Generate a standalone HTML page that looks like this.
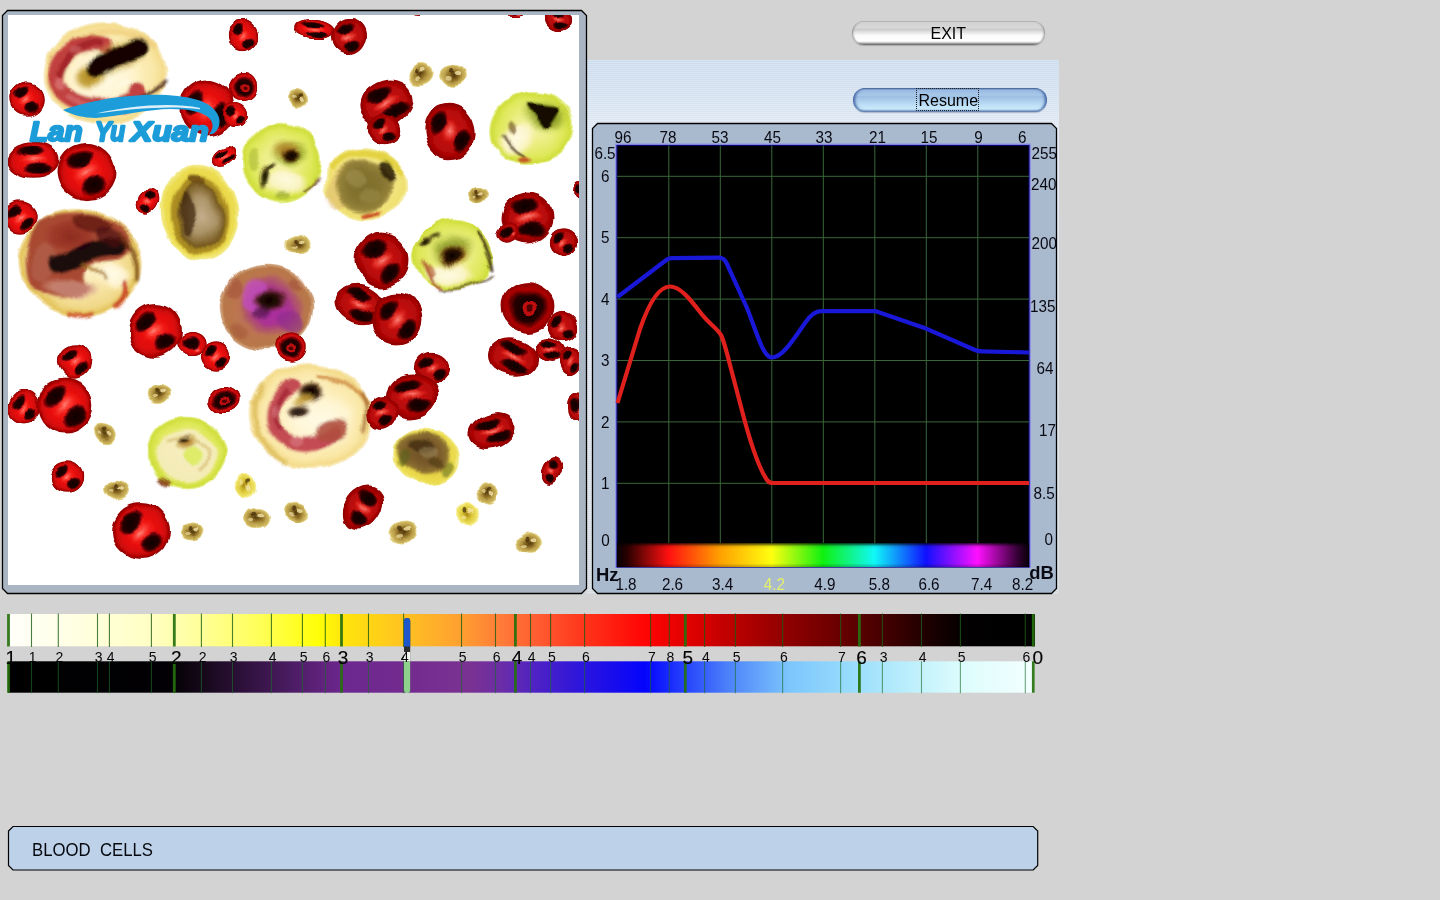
<!DOCTYPE html>
<html lang="en"><head><meta charset="utf-8"><title>BLOOD CELLS</title>
<style>
html,body{margin:0;padding:0}
body{width:1440px;height:900px;overflow:hidden;background:#d3d3d3;font-family:"Liberation Sans", sans-serif;position:relative;color:#000}
.abs{position:absolute;display:block}
svg text{font-family:"Liberation Sans", sans-serif}
.band{left:587px;top:60px;width:472px;height:534px;background:
 repeating-linear-gradient(180deg,rgba(255,255,255,.12) 0,rgba(255,255,255,.12) 1px,rgba(150,180,215,.10) 1px,rgba(150,180,215,.10) 2px),
 linear-gradient(180deg,#d3e1f0 0,#d9e5f2 30px,#e0e9f4 52px,#e6edf6 64px,#e2e7ee 300px,#dcdfe2 534px)}
.btn{height:23px;border-radius:12px;box-sizing:border-box;text-align:center;font-size:16px;line-height:23px}
.exit{left:851.5px;top:20.5px;width:193.5px;height:24.5px;border:0;
 background:linear-gradient(180deg,#adadad 0,#d2d2d2 6%,#d8d8d8 28%,#cbcbcb 35%,#e0e0e0 45%,#fafafa 60%,#ffffff 84%,#c4c4c4 91%,#6c6c6c 97%,#8a8a8a 100%);
 box-shadow:inset 2px 0 2px -1px #8c8c8c,inset -2px 0 2px -1px #8c8c8c,0 1px 1px rgba(120,120,120,.45);line-height:25.5px}
.resume{left:853px;top:88px;width:193.5px;height:23.5px;border:0;padding-right:3px;line-height:25px;
 background:linear-gradient(180deg,#3f5f8d 0,#98b9e1 8%,#a9c9ea 30%,#9dbde2 36%,#aacdec 50%,#c0e1f7 74%,#c8eafb 87%,#94b4d6 94%,#6683ab 100%);
 box-shadow:inset 3px 0 3px -1px #4060a0,inset -3px 0 3px -1px #4060a0,0 1px 1px rgba(90,110,140,.4)}
.focus{left:916px;top:88px;width:63px;height:23px;box-sizing:border-box;border:1px dotted #222}
.status{left:0;top:0}
.stxt{left:32px;top:839px;font-size:18px;line-height:22px;white-space:pre;color:#05080f;transform:scaleX(.93);transform-origin:0 0}
</style></head>
<body>
<div class="abs band"></div>
<svg class="abs" style="left:0;top:0" width="600" height="600" viewBox="0 0 600 600">
<defs><radialGradient id="rc" cx="0.5" cy="0.5" r="0.51"><stop offset="0" stop-color="#fc3a32"/><stop offset="0.4" stop-color="#ee1412"/><stop offset="0.72" stop-color="#dc0a0a"/><stop offset="0.87" stop-color="#c00606"/><stop offset="0.955" stop-color="#900000"/><stop offset="0.985" stop-color="#a00808" stop-opacity="0.9"/><stop offset="1" stop-color="#c83030" stop-opacity="0"/></radialGradient>
<radialGradient id="dk" cx="0.5" cy="0.5" r="0.5"><stop offset="0" stop-color="#080004" stop-opacity="0.98"/><stop offset="0.66" stop-color="#1c0004" stop-opacity="0.95"/><stop offset="0.86" stop-color="#500004" stop-opacity="0.6"/><stop offset="1" stop-color="#900000" stop-opacity="0"/></radialGradient>
<radialGradient id="hl" cx="0.5" cy="0.5" r="0.5"><stop offset="0" stop-color="#ff8c80" stop-opacity="0.9"/><stop offset="0.55" stop-color="#ff5044" stop-opacity="0.5"/><stop offset="1" stop-color="#ff3020" stop-opacity="0"/></radialGradient>
<radialGradient id="tb" cx="0.5" cy="0.5" r="0.5"><stop offset="0" stop-color="#50380c"/><stop offset="0.35" stop-color="#8c6c24"/><stop offset="0.6" stop-color="#b89c48"/><stop offset="0.84" stop-color="#d0b860"/><stop offset="0.94" stop-color="#e8d890" stop-opacity="0.8"/><stop offset="1" stop-color="#fff8d8" stop-opacity="0"/></radialGradient>
<radialGradient id="tby" cx="0.5" cy="0.5" r="0.5"><stop offset="0" stop-color="#a88818"/><stop offset="0.4" stop-color="#dcc838"/><stop offset="0.8" stop-color="#f0e468"/><stop offset="0.93" stop-color="#f8f0a0" stop-opacity="0.8"/><stop offset="1" stop-color="#fffcd0" stop-opacity="0"/></radialGradient>
<radialGradient id="b_beige" cx="0.5" cy="0.5" r="0.5"><stop offset="0" stop-color="#fff8dc"/><stop offset="0.5" stop-color="#fdf0c0"/><stop offset="0.8" stop-color="#fae8a8"/><stop offset="0.93" stop-color="#f4dc8c"/><stop offset="0.975" stop-color="#f6e4a8" stop-opacity="0.7"/><stop offset="1" stop-color="#fff4d0" stop-opacity="0"/></radialGradient>
<radialGradient id="b_beige2" cx="0.5" cy="0.5" r="0.5"><stop offset="0" stop-color="#fff4d0"/><stop offset="0.55" stop-color="#f8e6a8"/><stop offset="0.82" stop-color="#f0d888"/><stop offset="0.93" stop-color="#e4c45c"/><stop offset="0.975" stop-color="#f0d890" stop-opacity="0.7"/><stop offset="1" stop-color="#fff4d0" stop-opacity="0"/></radialGradient>
<radialGradient id="b_yg" cx="0.5" cy="0.5" r="0.5"><stop offset="0" stop-color="#f6f4b0"/><stop offset="0.45" stop-color="#ecee84"/><stop offset="0.78" stop-color="#dee858"/><stop offset="0.93" stop-color="#d0de3c"/><stop offset="0.98" stop-color="#e4ee80" stop-opacity="0.75"/><stop offset="1" stop-color="#f8fcd0" stop-opacity="0"/></radialGradient>
<radialGradient id="b_yellow" cx="0.5" cy="0.5" r="0.5"><stop offset="0" stop-color="#e0c43c"/><stop offset="0.6" stop-color="#e8d444"/><stop offset="0.88" stop-color="#ecdc50"/><stop offset="0.965" stop-color="#f0e670" stop-opacity="0.85"/><stop offset="1" stop-color="#fcf8c0" stop-opacity="0"/></radialGradient>
<radialGradient id="b_ylight" cx="0.5" cy="0.5" r="0.5"><stop offset="0" stop-color="#f4e478"/><stop offset="0.6" stop-color="#f2e684"/><stop offset="0.9" stop-color="#f0e070"/><stop offset="0.97" stop-color="#f4ea98" stop-opacity="0.8"/><stop offset="1" stop-color="#fcf8d0" stop-opacity="0"/></radialGradient>
<radialGradient id="b_pink" cx="0.5" cy="0.5" r="0.5"><stop offset="0" stop-color="#b86850"/><stop offset="0.6" stop-color="#bc7452"/><stop offset="0.9" stop-color="#b87848"/><stop offset="0.97" stop-color="#c89468" stop-opacity="0.85"/><stop offset="1" stop-color="#f0d8c0" stop-opacity="0"/></radialGradient>
<radialGradient id="c_tan" cx="0.5" cy="0.5" r="0.5"><stop offset="0" stop-color="#c4ae8c"/><stop offset="0.55" stop-color="#ac9468"/><stop offset="0.85" stop-color="#846830"/><stop offset="1" stop-color="#6c5018"/></radialGradient>
<radialGradient id="c_olive" cx="0.5" cy="0.5" r="0.5"><stop offset="0" stop-color="#7c6c2c"/><stop offset="0.6" stop-color="#857430"/><stop offset="0.88" stop-color="#94823a"/><stop offset="1" stop-color="#a89040" stop-opacity="0.6"/></radialGradient>
<radialGradient id="c_brown" cx="0.5" cy="0.5" r="0.5"><stop offset="0" stop-color="#6c5024"/><stop offset="0.6" stop-color="#7c5c2c"/><stop offset="0.9" stop-color="#8c7030"/><stop offset="1" stop-color="#a08838" stop-opacity="0.5"/></radialGradient>
<radialGradient id="s_dark" cx="0.5" cy="0.5" r="0.5"><stop offset="0" stop-color="#0a0200"/><stop offset="0.55" stop-color="#200a00" stop-opacity="0.95"/><stop offset="0.8" stop-color="#4c2008" stop-opacity="0.6"/><stop offset="1" stop-color="#804818" stop-opacity="0"/></radialGradient>
<radialGradient id="s_olvdark" cx="0.5" cy="0.5" r="0.5"><stop offset="0" stop-color="#100c00"/><stop offset="0.5" stop-color="#2c2408" stop-opacity="0.9"/><stop offset="0.8" stop-color="#605018" stop-opacity="0.5"/><stop offset="1" stop-color="#90802c" stop-opacity="0"/></radialGradient>
<radialGradient id="s_cream" cx="0.5" cy="0.5" r="0.5"><stop offset="0" stop-color="#fffbe8"/><stop offset="0.65" stop-color="#fff6d8" stop-opacity="0.9"/><stop offset="1" stop-color="#fff0c0" stop-opacity="0"/></radialGradient>
<radialGradient id="s_mag" cx="0.5" cy="0.5" r="0.5"><stop offset="0" stop-color="#b028b0"/><stop offset="0.55" stop-color="#a82c98" stop-opacity="0.9"/><stop offset="0.85" stop-color="#a84078" stop-opacity="0.5"/><stop offset="1" stop-color="#a85868" stop-opacity="0"/></radialGradient>
<radialGradient id="s_gold" cx="0.5" cy="0.5" r="0.5"><stop offset="0" stop-color="#b08820"/><stop offset="0.6" stop-color="#c09c30" stop-opacity="0.9"/><stop offset="1" stop-color="#e0c060" stop-opacity="0"/></radialGradient>
<radialGradient id="s_pinkbr" cx="0.5" cy="0.5" r="0.5"><stop offset="0" stop-color="#c07c6c"/><stop offset="0.6" stop-color="#c88878" stop-opacity="0.85"/><stop offset="1" stop-color="#e0b098" stop-opacity="0"/></radialGradient>
<radialGradient id="s_redbr" cx="0.5" cy="0.5" r="0.5"><stop offset="0" stop-color="#8c2c20"/><stop offset="0.6" stop-color="#9c3828" stop-opacity="0.9"/><stop offset="1" stop-color="#b05038" stop-opacity="0"/></radialGradient>
<radialGradient id="s_brownhalo" cx="0.5" cy="0.5" r="0.5"><stop offset="0" stop-color="#a87020" stop-opacity="0.95"/><stop offset="0.55" stop-color="#b88c30" stop-opacity="0.7"/><stop offset="1" stop-color="#d0c050" stop-opacity="0"/></radialGradient>
<radialGradient id="s_grnhalo" cx="0.5" cy="0.5" r="0.5"><stop offset="0" stop-color="#647410" stop-opacity="0.95"/><stop offset="0.55" stop-color="#8c9c20" stop-opacity="0.75"/><stop offset="1" stop-color="#c8d848" stop-opacity="0"/></radialGradient><clipPath id="imgclip"><rect x="8" y="15" width="571" height="570"/></clipPath><filter id="soft" x="0" y="0" width="100%" height="100%" filterUnits="objectBoundingBox"><feTurbulence type="fractalNoise" baseFrequency="0.035" numOctaves="2" seed="7" result="n"/><feDisplacementMap in="SourceGraphic" in2="n" scale="9" xChannelSelector="R" yChannelSelector="G"/><feGaussianBlur stdDeviation="0.55"/></filter><filter id="bl13" x="-20%" y="-20%" width="140%" height="140%"><feGaussianBlur stdDeviation="1.3"/></filter><filter id="bl16" x="-20%" y="-20%" width="140%" height="140%"><feGaussianBlur stdDeviation="1.6"/></filter></defs>
<polygon points="7.5,10.5 581.5,10.5 586.5,15.5 586.5,588.5 581.5,593.5 7.5,593.5 2.5,588.5 2.5,15.5" fill="#a9b5c3" stroke="#000" stroke-width="1.3"/>
<rect x="8" y="15" width="571" height="570" fill="#fff"/>
<g clip-path="url(#imgclip)"><g filter="url(#soft)">
<ellipse cx="104.5" cy="73.5" rx="63" ry="52.5" fill="url(#b_beige)" transform="rotate(-4 104.5 73.5)"/><g filter="url(#bl16)"><path d="M62 52 C82 27 130 25 154 46" fill="none" stroke="#f0d080" stroke-width="6" stroke-linecap="round" stroke-linejoin="round" opacity="0.8"/><ellipse cx="102" cy="76" rx="44" ry="32" fill="url(#s_cream)" transform="rotate(-8 102 76)" opacity="0.9"/><path d="M104 45 C80 38 57 56 56 76 C55 98 85 112 120 104 C134 100 140 95 137 91" fill="none" stroke="#bc3438" stroke-width="17" stroke-linecap="round" stroke-linejoin="round" opacity="0.93"/><path d="M100 43 C84 42 66 54 61 72" fill="none" stroke="#98181e" stroke-width="8" stroke-linecap="round" stroke-linejoin="round" opacity="0.7"/><path d="M68 97 C86 108 106 110 126 104" fill="none" stroke="#dc7c7c" stroke-width="6" stroke-linecap="round" stroke-linejoin="round" opacity="0.55"/><ellipse cx="60" cy="84" rx="5" ry="7" fill="#e89090" opacity="0.5"/><ellipse cx="76" cy="50" rx="6" ry="4" fill="#e08888" opacity="0.45"/><ellipse cx="98" cy="106" rx="7" ry="4" fill="#a02028" opacity="0.5"/><ellipse cx="90" cy="76" rx="18" ry="15" fill="url(#s_gold)" transform="rotate(-20 90 76)"/><ellipse cx="118" cy="58" rx="35" ry="18" fill="url(#s_brownhalo)" transform="rotate(-24 118 58)" opacity="0.9"/><path d="M96 68 L138 48" fill="none" stroke="#140400" stroke-width="19.5" stroke-linecap="round" stroke-linejoin="round"/><path d="M128 103 Q150 96 166 80" fill="none" stroke="#3a1408" stroke-width="2.8" stroke-linecap="round" stroke-linejoin="round"/><ellipse cx="124" cy="83" rx="14" ry="5" fill="url(#s_cream)" transform="rotate(-20 124 83)" opacity="0.9"/></g>
<ellipse cx="80" cy="263" rx="63" ry="55" fill="url(#b_beige2)" transform="rotate(8 80 263)"/><g filter="url(#bl16)"><path d="M38 222 C60 209 108 210 126 232 C137 252 124 264 98 262 C84 262 78 275 90 291 C74 303 42 301 31 285 C23 265 28 238 38 222z" fill="#a84832"/><ellipse cx="70" cy="236" rx="32" ry="19" fill="url(#s_redbr)" transform="rotate(5 70 236)"/><ellipse cx="92" cy="224" rx="20" ry="8" fill="#5c1410" transform="rotate(10 92 224)" opacity="0.75"/><ellipse cx="70" cy="289" rx="31" ry="11" fill="url(#s_pinkbr)" transform="rotate(5 70 289)"/><ellipse cx="44" cy="262" rx="12" ry="20" fill="#b46850" transform="rotate(10 44 262)" opacity="0.6"/><path d="M57 264 C72 263 84 247 118 246" fill="none" stroke="#180406" stroke-width="18" stroke-linecap="round" stroke-linejoin="round" opacity="0.96"/><ellipse cx="110" cy="236" rx="14" ry="8" fill="#4c1010" transform="rotate(25 110 236)" opacity="0.7"/><ellipse cx="112" cy="276" rx="21" ry="14" fill="url(#s_cream)" transform="rotate(10 112 276)"/><path d="M82 264 Q98 268 104 281" fill="none" stroke="#a07020" stroke-width="3.2" stroke-linecap="round" stroke-linejoin="round" opacity="0.85"/><path d="M125 283 Q130 296 116 306" fill="none" stroke="#c43018" stroke-width="4.2" stroke-linecap="round" stroke-linejoin="round" opacity="0.9"/><path d="M70 314 Q80 318 92 314" fill="none" stroke="#c43018" stroke-width="3.2" stroke-linecap="round" stroke-linejoin="round" opacity="0.9"/><path d="M120 234 Q139 252 137 280" fill="none" stroke="#5c2808" stroke-width="3.2" stroke-linecap="round" stroke-linejoin="round" opacity="0.8"/></g>
<ellipse cx="310.5" cy="416" rx="63" ry="54" fill="url(#b_beige)" transform="rotate(5 310.5 416)"/><g filter="url(#bl16)"><path d="M262 386 C248 410 255 446 286 463" fill="none" stroke="#dcbc58" stroke-width="5" stroke-linecap="round" stroke-linejoin="round" opacity="0.8"/><ellipse cx="320" cy="420" rx="40" ry="30" fill="url(#s_cream)" opacity="0.8"/><path d="M294 386 C272 394 266 426 284 438 C300 448 322 444 334 432" fill="none" stroke="#bc3444" stroke-width="14" stroke-linecap="round" stroke-linejoin="round" opacity="0.88"/><path d="M286 392 C276 402 274 418 280 428" fill="none" stroke="#981c2c" stroke-width="6" stroke-linecap="round" stroke-linejoin="round" opacity="0.6"/><ellipse cx="332" cy="430" rx="16" ry="10" fill="#b05040" transform="rotate(-10 332 430)" opacity="0.9"/><ellipse cx="296" cy="440" rx="8" ry="5" fill="#e08890" opacity="0.5"/><ellipse cx="276" cy="410" rx="4" ry="6" fill="#e08890" opacity="0.5"/><ellipse cx="311" cy="393" rx="14" ry="9.5" fill="url(#s_dark)" transform="rotate(-5 311 393)"/><ellipse cx="300" cy="411" rx="12" ry="7" fill="url(#s_dark)" transform="rotate(-5 300 411)" opacity="0.9"/><ellipse cx="304" cy="400" rx="13" ry="5" fill="url(#s_gold)" transform="rotate(-10 304 400)" opacity="0.85"/><path d="M318 378 Q350 376 368 405" fill="none" stroke="#c47830" stroke-width="3.2" stroke-linecap="round" stroke-linejoin="round" opacity="0.85"/><path d="M362 392 Q370 410 364 430" fill="none" stroke="#8c4818" stroke-width="2.8" stroke-linecap="round" stroke-linejoin="round" opacity="0.75"/></g>
<ellipse cx="200" cy="212.5" rx="39" ry="49" fill="url(#b_yellow)" transform="rotate(-10 200 212.5)"/><g filter="url(#bl13)"><ellipse cx="200" cy="215" rx="29" ry="39" fill="#a4841c" transform="rotate(-8 200 215)" opacity="0.9"/><ellipse cx="201" cy="215" rx="23.5" ry="33.5" fill="url(#c_tan)" transform="rotate(-8 201 215)"/><ellipse cx="187" cy="212" rx="7" ry="22" fill="#38200a" transform="rotate(-8 187 212)" opacity="0.7"/><ellipse cx="196" cy="180" rx="9" ry="4" fill="#6c4810" transform="rotate(10 196 180)" opacity="0.8"/></g>
<ellipse cx="365" cy="184" rx="42" ry="36.5" fill="url(#b_ylight)" transform="rotate(5 365 184)"/><g filter="url(#bl13)"><path d="M334 166 C350 148 388 150 400 172" fill="none" stroke="#e0d038" stroke-width="6" stroke-linecap="round" stroke-linejoin="round" opacity="0.85"/><ellipse cx="340" cy="190" rx="12" ry="22" fill="#e0bc70" transform="rotate(10 340 190)" opacity="0.6"/><ellipse cx="363" cy="186" rx="29" ry="26" fill="url(#c_olive)" transform="rotate(5 363 186)"/><ellipse cx="356" cy="180" rx="12" ry="8" fill="#a89858" transform="rotate(20 356 180)" opacity="0.5"/><ellipse cx="370" cy="196" rx="10" ry="6" fill="#a09050" transform="rotate(-10 370 196)" opacity="0.45"/><ellipse cx="386" cy="171" rx="7" ry="10" fill="#241804" transform="rotate(-25 386 171)" opacity="0.85"/><ellipse cx="372" cy="214" rx="10" ry="2.6" fill="#c84020" transform="rotate(-10 372 214)" opacity="0.85"/></g>
<ellipse cx="426" cy="456" rx="34" ry="28.5" fill="url(#b_yellow)" transform="rotate(18 426 456)"/><g filter="url(#bl13)"><ellipse cx="423" cy="452.5" rx="27" ry="21.5" fill="url(#c_brown)" transform="rotate(15 423 452.5)"/><ellipse cx="420" cy="446" rx="12" ry="7" fill="#3c2810" transform="rotate(10 420 446)" opacity="0.7"/><ellipse cx="436" cy="462" rx="8" ry="5" fill="#4c3814" transform="rotate(10 436 462)" opacity="0.6"/><ellipse cx="428" cy="452" rx="9" ry="6" fill="#a08c60" opacity="0.5"/><ellipse cx="404" cy="458" rx="5" ry="9" fill="#586018" transform="rotate(10 404 458)" opacity="0.6"/><ellipse cx="448" cy="468" rx="5" ry="8" fill="#687020" transform="rotate(30 448 468)" opacity="0.6"/></g>
<ellipse cx="281.5" cy="162" rx="40" ry="41" fill="url(#b_yg)"/><g filter="url(#bl13)"><ellipse cx="286" cy="182" rx="24" ry="14" fill="url(#s_cream)" opacity="0.9"/><ellipse cx="290" cy="153" rx="21" ry="15" fill="url(#s_grnhalo)"/><ellipse cx="286" cy="150" rx="16" ry="11" fill="url(#s_brownhalo)"/><ellipse cx="290.5" cy="154.5" rx="11" ry="7.5" fill="url(#s_dark)"/><ellipse cx="264" cy="176" rx="5" ry="14" fill="url(#s_olvdark)" transform="rotate(8 264 176)"/><ellipse cx="270" cy="166" rx="8" ry="3.5" fill="url(#s_olvdark)" transform="rotate(-30 270 166)" opacity="0.85"/><ellipse cx="255" cy="160" rx="5" ry="12" fill="#a0b028" transform="rotate(10 255 160)" opacity="0.5"/><path d="M305 190 Q314 186 318 178" fill="none" stroke="#5c3010" stroke-width="2.4" stroke-linecap="round" stroke-linejoin="round" opacity="0.85"/><ellipse cx="282" cy="196" rx="8" ry="3" fill="#90a028" opacity="0.6"/></g>
<ellipse cx="531" cy="128" rx="43" ry="37" fill="url(#b_yg)" transform="rotate(-18 531 128)"/><g filter="url(#bl13)"><ellipse cx="516" cy="140" rx="22" ry="16" fill="url(#s_cream)" transform="rotate(-20 516 140)" opacity="0.95"/><ellipse cx="546" cy="116" rx="27" ry="19" fill="url(#s_grnhalo)" transform="rotate(10 546 116)"/><path d="M531 106 L557 109 L546 127z" fill="#181000" stroke="#181000" stroke-width="6" stroke-linecap="round" stroke-linejoin="round"/><path d="M503 134 Q510 148 524 156" fill="none" stroke="#4c3008" stroke-width="2.8" stroke-linecap="round" stroke-linejoin="round" opacity="0.85"/><ellipse cx="512" cy="128" rx="4" ry="7" fill="#604010" transform="rotate(-20 512 128)" opacity="0.6"/><ellipse cx="524" cy="160" rx="6" ry="2.5" fill="#c03020" opacity="0.8"/></g>
<path d="M412 268 C410 240 432 217 456 218 C476 219 490 240 495 272 C494 284 470 290 440 291 C420 291 412 282 412 268z" fill="url(#b_yg)"/><g filter="url(#bl13)"><ellipse cx="448" cy="274" rx="28" ry="13" fill="url(#s_cream)" transform="rotate(5 448 274)" opacity="0.95"/><ellipse cx="452" cy="250" rx="24" ry="19" fill="url(#s_grnhalo)"/><ellipse cx="454" cy="256" rx="18" ry="14" fill="url(#s_brownhalo)"/><ellipse cx="452" cy="254.5" rx="13.5" ry="12" fill="url(#s_dark)"/><ellipse cx="427" cy="241" rx="9" ry="5" fill="url(#s_olvdark)" transform="rotate(-30 427 241)"/><ellipse cx="436" cy="235" rx="6" ry="3" fill="url(#s_olvdark)" transform="rotate(-20 436 235)" opacity="0.8"/><path d="M476 232 Q487 248 492 270" fill="none" stroke="#2c2008" stroke-width="2.8" stroke-linecap="round" stroke-linejoin="round" opacity="0.9"/><path d="M424 262 Q428 278 440 288" fill="none" stroke="#a84028" stroke-width="3" stroke-linecap="round" stroke-linejoin="round" opacity="0.8"/><path d="M440 290 Q466 290 492 276" fill="none" stroke="#3c2408" stroke-width="2.2" stroke-linecap="round" stroke-linejoin="round" opacity="0.7"/><ellipse cx="430" cy="270" rx="4" ry="8" fill="#b05830" transform="rotate(-20 430 270)" opacity="0.65"/></g>
<ellipse cx="187" cy="453" rx="40" ry="37" fill="url(#b_yg)"/><g filter="url(#bl13)"><ellipse cx="186" cy="456" rx="30" ry="27" fill="#f6ecc0" opacity="0.9"/><ellipse cx="187" cy="441" rx="12" ry="8" fill="url(#s_brownhalo)" transform="rotate(-15 187 441)"/><ellipse cx="184" cy="438" rx="6" ry="4.5" fill="url(#s_dark)" transform="rotate(-20 184 438)"/><ellipse cx="193" cy="456" rx="9" ry="10" fill="#dcec60" opacity="0.9"/><path d="M168 440 Q186 430 206 446 Q212 460 200 470" fill="none" stroke="#d8c078" stroke-width="3" stroke-linecap="round" stroke-linejoin="round" opacity="0.8"/><ellipse cx="164" cy="481" rx="7" ry="3" fill="#7c2c10" transform="rotate(30 164 481)" opacity="0.8"/></g>
<ellipse cx="266.5" cy="307.5" rx="47.5" ry="43.5" fill="url(#b_pink)"/><g filter="url(#bl16)"><ellipse cx="271" cy="306" rx="35" ry="30" fill="url(#s_mag)" transform="rotate(25 271 306)"/><ellipse cx="254" cy="296" rx="13" ry="16" fill="#c850d0" transform="rotate(20 254 296)" opacity="0.65"/><ellipse cx="290" cy="322" rx="14" ry="10" fill="#8c2c90" transform="rotate(30 290 322)" opacity="0.6"/><ellipse cx="270" cy="300" rx="20" ry="11.5" fill="url(#s_dark)" transform="rotate(-5 270 300)"/><ellipse cx="262" cy="312" rx="10" ry="5" fill="#301030" transform="rotate(-10 262 312)" opacity="0.5"/><ellipse cx="240" cy="330" rx="10" ry="6" fill="#a45838" transform="rotate(30 240 330)" opacity="0.6"/><ellipse cx="234" cy="290" rx="7" ry="10" fill="#a04838" transform="rotate(10 234 290)" opacity="0.5"/><ellipse cx="296" cy="284" rx="8" ry="5" fill="#a04838" transform="rotate(30 296 284)" opacity="0.5"/></g>
<g transform="translate(243 36) rotate(0) scale(15 15)"><circle r="1.02" fill="url(#rc)"/><ellipse cx="-.36" cy="-.34" rx=".56" ry=".33" fill="url(#dk)" transform="rotate(-42 -.36 -.34)"/><ellipse cx=".38" cy=".42" rx=".5" ry=".36" fill="url(#dk)" transform="rotate(-42 .38 .42)"/><ellipse cx="0" cy=".04" rx=".24" ry=".5" fill="url(#hl)" transform="rotate(42)"/></g>
<g transform="translate(315 30) rotate(5) scale(19.5 10)"><circle r="1.02" fill="url(#rc)"/><ellipse cx="-.12" cy="-.46" rx=".62" ry=".34" fill="url(#dk)"/><ellipse cx=".18" cy=".5" rx=".62" ry=".34" fill="url(#dk)"/><ellipse cx="0" cy="0" rx=".6" ry=".2" fill="url(#hl)"/></g>
<g transform="translate(348.5 36.5) rotate(20) scale(16 17.5)"><circle r="1.02" fill="url(#rc)"/><circle r=".97" fill="#500000" opacity=".28"/><ellipse cx="-.36" cy="-.34" rx=".56" ry=".33" fill="url(#dk)" transform="rotate(-42 -.36 -.34)"/><ellipse cx=".38" cy=".42" rx=".5" ry=".36" fill="url(#dk)" transform="rotate(-42 .38 .42)"/><ellipse cx="0" cy=".04" rx=".24" ry=".5" fill="url(#hl)" transform="rotate(42)"/></g>
<g transform="translate(559 19) rotate(0) scale(14 12)"><circle r="1.02" fill="url(#rc)"/><circle r=".97" fill="#500000" opacity=".28"/><ellipse cx="-.12" cy="-.46" rx=".62" ry=".34" fill="url(#dk)"/><ellipse cx=".18" cy=".5" rx=".62" ry=".34" fill="url(#dk)"/><ellipse cx="0" cy="0" rx=".6" ry=".2" fill="url(#hl)"/></g>
<g transform="translate(420 12) rotate(0) scale(12 5)"><circle r="1.02" fill="url(#rc)"/><circle r=".97" fill="#500000" opacity=".28"/><ellipse cx="-.1" cy="-.1" rx=".72" ry=".62" fill="url(#dk)"/><ellipse cx=".35" cy=".45" rx=".3" ry=".24" fill="url(#hl)"/></g>
<g transform="translate(517 12) rotate(0) scale(10 4)"><circle r="1.02" fill="url(#rc)"/><circle r=".97" fill="#500000" opacity=".28"/><ellipse cx="-.1" cy="-.1" rx=".72" ry=".62" fill="url(#dk)"/><ellipse cx=".35" cy=".45" rx=".3" ry=".24" fill="url(#hl)"/></g>
<g transform="translate(27 99) rotate(10) scale(16.5 16.5)"><circle r="1.02" fill="url(#rc)"/><ellipse cx="-.36" cy="-.34" rx=".56" ry=".33" fill="url(#dk)" transform="rotate(-42 -.36 -.34)"/><ellipse cx=".38" cy=".42" rx=".5" ry=".36" fill="url(#dk)" transform="rotate(-42 .38 .42)"/><ellipse cx="0" cy=".04" rx=".24" ry=".5" fill="url(#hl)" transform="rotate(42)"/></g>
<g transform="translate(243 87) rotate(0) scale(14 14)"><circle r="1.02" fill="url(#rc)"/><ellipse cx="0" cy="0" rx=".84" ry=".8" fill="url(#dk)"/><ellipse cx=".04" cy=".02" rx=".3" ry=".28" fill="#c01010"/><ellipse cx=".04" cy=".02" rx=".14" ry=".13" fill="#500000"/></g>
<g transform="translate(207 108) rotate(-20) scale(28 28)"><circle r="1.02" fill="url(#rc)"/><ellipse cx="-.36" cy="-.34" rx=".56" ry=".33" fill="url(#dk)" transform="rotate(-42 -.36 -.34)"/><ellipse cx=".38" cy=".42" rx=".5" ry=".36" fill="url(#dk)" transform="rotate(-42 .38 .42)"/><ellipse cx="0" cy=".04" rx=".24" ry=".5" fill="url(#hl)" transform="rotate(42)"/></g>
<g transform="translate(236 115) rotate(0) scale(13 12)"><circle r="1.02" fill="url(#rc)"/><ellipse cx="-.36" cy="-.34" rx=".56" ry=".33" fill="url(#dk)" transform="rotate(-42 -.36 -.34)"/><ellipse cx=".38" cy=".42" rx=".5" ry=".36" fill="url(#dk)" transform="rotate(-42 .38 .42)"/><ellipse cx="0" cy=".04" rx=".24" ry=".5" fill="url(#hl)" transform="rotate(42)"/></g>
<g transform="translate(386 103) rotate(-25) scale(27 22)"><circle r="1.02" fill="url(#rc)"/><circle r=".97" fill="#500000" opacity=".28"/><ellipse cx="-.12" cy="-.46" rx=".62" ry=".34" fill="url(#dk)"/><ellipse cx=".18" cy=".5" rx=".62" ry=".34" fill="url(#dk)"/><ellipse cx="0" cy="0" rx=".6" ry=".2" fill="url(#hl)"/></g>
<g transform="translate(385 129) rotate(10) scale(17 16)"><circle r="1.02" fill="url(#rc)"/><circle r=".97" fill="#500000" opacity=".28"/><ellipse cx="-.36" cy="-.34" rx=".56" ry=".33" fill="url(#dk)" transform="rotate(-42 -.36 -.34)"/><ellipse cx=".38" cy=".42" rx=".5" ry=".36" fill="url(#dk)" transform="rotate(-42 .38 .42)"/><ellipse cx="0" cy=".04" rx=".24" ry=".5" fill="url(#hl)" transform="rotate(42)"/></g>
<g transform="translate(450 131) rotate(-15) scale(25 28)"><circle r="1.02" fill="url(#rc)"/><circle r=".97" fill="#500000" opacity=".28"/><ellipse cx="-.36" cy="-.34" rx=".56" ry=".33" fill="url(#dk)" transform="rotate(-42 -.36 -.34)"/><ellipse cx=".38" cy=".42" rx=".5" ry=".36" fill="url(#dk)" transform="rotate(-42 .38 .42)"/><ellipse cx="0" cy=".04" rx=".24" ry=".5" fill="url(#hl)" transform="rotate(42)"/></g>
<g transform="translate(223 157) rotate(-30) scale(13 8.5)"><circle r="1.02" fill="url(#rc)"/><ellipse cx="-.12" cy="-.46" rx=".62" ry=".34" fill="url(#dk)"/><ellipse cx=".18" cy=".5" rx=".62" ry=".34" fill="url(#dk)"/><ellipse cx="0" cy="0" rx=".6" ry=".2" fill="url(#hl)"/></g>
<g transform="translate(33 160) rotate(0) scale(26 17.5)"><circle r="1.02" fill="url(#rc)"/><ellipse cx="-.12" cy="-.46" rx=".62" ry=".34" fill="url(#dk)"/><ellipse cx=".18" cy=".5" rx=".62" ry=".34" fill="url(#dk)"/><ellipse cx="0" cy="0" rx=".6" ry=".2" fill="url(#hl)"/></g>
<g transform="translate(87 172) rotate(20) scale(29 28.5)"><circle r="1.02" fill="url(#rc)"/><ellipse cx="-.36" cy="-.34" rx=".56" ry=".33" fill="url(#dk)" transform="rotate(-42 -.36 -.34)"/><ellipse cx=".38" cy=".42" rx=".5" ry=".36" fill="url(#dk)" transform="rotate(-42 .38 .42)"/><ellipse cx="0" cy=".04" rx=".24" ry=".5" fill="url(#hl)" transform="rotate(42)"/></g>
<g transform="translate(148 202) rotate(30) scale(11.5 14)"><circle r="1.02" fill="url(#rc)"/><ellipse cx="-.12" cy="-.46" rx=".62" ry=".34" fill="url(#dk)"/><ellipse cx=".18" cy=".5" rx=".62" ry=".34" fill="url(#dk)"/><ellipse cx="0" cy="0" rx=".6" ry=".2" fill="url(#hl)"/></g>
<g transform="translate(21 217) rotate(0) scale(15.5 15.5)"><circle r="1.02" fill="url(#rc)"/><ellipse cx="-.36" cy="-.34" rx=".56" ry=".33" fill="url(#dk)" transform="rotate(-42 -.36 -.34)"/><ellipse cx=".38" cy=".42" rx=".5" ry=".36" fill="url(#dk)" transform="rotate(-42 .38 .42)"/><ellipse cx="0" cy=".04" rx=".24" ry=".5" fill="url(#hl)" transform="rotate(42)"/></g>
<g transform="translate(527 218) rotate(0) scale(26 25)"><circle r="1.02" fill="url(#rc)"/><circle r=".97" fill="#500000" opacity=".28"/><ellipse cx="-.12" cy="-.46" rx=".62" ry=".34" fill="url(#dk)"/><ellipse cx=".18" cy=".5" rx=".62" ry=".34" fill="url(#dk)"/><ellipse cx="0" cy="0" rx=".6" ry=".2" fill="url(#hl)"/></g>
<g transform="translate(508 233) rotate(-30) scale(12 10)"><circle r="1.02" fill="url(#rc)"/><circle r=".97" fill="#500000" opacity=".28"/><ellipse cx="-.1" cy="-.1" rx=".72" ry=".62" fill="url(#dk)"/><ellipse cx=".35" cy=".45" rx=".3" ry=".24" fill="url(#hl)"/></g>
<g transform="translate(564 242) rotate(0) scale(14 13.5)"><circle r="1.02" fill="url(#rc)"/><circle r=".97" fill="#500000" opacity=".28"/><ellipse cx="-.36" cy="-.34" rx=".56" ry=".33" fill="url(#dk)" transform="rotate(-42 -.36 -.34)"/><ellipse cx=".38" cy=".42" rx=".5" ry=".36" fill="url(#dk)" transform="rotate(-42 .38 .42)"/><ellipse cx="0" cy=".04" rx=".24" ry=".5" fill="url(#hl)" transform="rotate(42)"/></g>
<g transform="translate(581 189) rotate(0) scale(6 9)"><circle r="1.02" fill="url(#rc)"/><circle r=".97" fill="#500000" opacity=".28"/><ellipse cx="-.1" cy="-.1" rx=".72" ry=".62" fill="url(#dk)"/><ellipse cx=".35" cy=".45" rx=".3" ry=".24" fill="url(#hl)"/></g>
<g transform="translate(382 260) rotate(10) scale(27 27)"><circle r="1.02" fill="url(#rc)"/><circle r=".97" fill="#500000" opacity=".28"/><ellipse cx="-.36" cy="-.34" rx=".56" ry=".33" fill="url(#dk)" transform="rotate(-42 -.36 -.34)"/><ellipse cx=".38" cy=".42" rx=".5" ry=".36" fill="url(#dk)" transform="rotate(-42 .38 .42)"/><ellipse cx="0" cy=".04" rx=".24" ry=".5" fill="url(#hl)" transform="rotate(42)"/></g>
<g transform="translate(360 304) rotate(15) scale(24.5 18.5)"><circle r="1.02" fill="url(#rc)"/><circle r=".97" fill="#500000" opacity=".28"/><ellipse cx="-.12" cy="-.46" rx=".62" ry=".34" fill="url(#dk)"/><ellipse cx=".18" cy=".5" rx=".62" ry=".34" fill="url(#dk)"/><ellipse cx="0" cy="0" rx=".6" ry=".2" fill="url(#hl)"/></g>
<g transform="translate(397 319) rotate(0) scale(24 26)"><circle r="1.02" fill="url(#rc)"/><circle r=".97" fill="#500000" opacity=".28"/><ellipse cx="-.36" cy="-.34" rx=".56" ry=".33" fill="url(#dk)" transform="rotate(-42 -.36 -.34)"/><ellipse cx=".38" cy=".42" rx=".5" ry=".36" fill="url(#dk)" transform="rotate(-42 .38 .42)"/><ellipse cx="0" cy=".04" rx=".24" ry=".5" fill="url(#hl)" transform="rotate(42)"/></g>
<g transform="translate(155 330.5) rotate(0) scale(26.5 27)"><circle r="1.02" fill="url(#rc)"/><ellipse cx="-.36" cy="-.34" rx=".56" ry=".33" fill="url(#dk)" transform="rotate(-42 -.36 -.34)"/><ellipse cx=".38" cy=".42" rx=".5" ry=".36" fill="url(#dk)" transform="rotate(-42 .38 .42)"/><ellipse cx="0" cy=".04" rx=".24" ry=".5" fill="url(#hl)" transform="rotate(42)"/></g>
<g transform="translate(192.5 344) rotate(0) scale(14 12)"><circle r="1.02" fill="url(#rc)"/><ellipse cx="-.1" cy="-.1" rx=".72" ry=".62" fill="url(#dk)"/><ellipse cx=".35" cy=".45" rx=".3" ry=".24" fill="url(#hl)"/></g>
<g transform="translate(216 355.5) rotate(0) scale(14 14)"><circle r="1.02" fill="url(#rc)"/><ellipse cx="-.36" cy="-.34" rx=".56" ry=".33" fill="url(#dk)" transform="rotate(-42 -.36 -.34)"/><ellipse cx=".38" cy=".42" rx=".5" ry=".36" fill="url(#dk)" transform="rotate(-42 .38 .42)"/><ellipse cx="0" cy=".04" rx=".24" ry=".5" fill="url(#hl)" transform="rotate(42)"/></g>
<g transform="translate(291 347) rotate(0) scale(14.5 14.5)"><circle r="1.02" fill="url(#rc)"/><ellipse cx="0" cy="0" rx=".84" ry=".8" fill="url(#dk)"/><ellipse cx=".04" cy=".02" rx=".3" ry=".28" fill="#c01010"/><ellipse cx=".04" cy=".02" rx=".14" ry=".13" fill="#500000"/></g>
<g transform="translate(528 307) rotate(0) scale(25 24.5)"><circle r="1.02" fill="url(#rc)"/><circle r=".97" fill="#500000" opacity=".28"/><ellipse cx="0" cy="0" rx=".84" ry=".8" fill="url(#dk)"/><ellipse cx=".04" cy=".02" rx=".3" ry=".28" fill="#c01010"/><ellipse cx=".04" cy=".02" rx=".14" ry=".13" fill="#500000"/></g>
<g transform="translate(563 327) rotate(0) scale(15 15)"><circle r="1.02" fill="url(#rc)"/><circle r=".97" fill="#500000" opacity=".28"/><ellipse cx="-.36" cy="-.34" rx=".56" ry=".33" fill="url(#dk)" transform="rotate(-42 -.36 -.34)"/><ellipse cx=".38" cy=".42" rx=".5" ry=".36" fill="url(#dk)" transform="rotate(-42 .38 .42)"/><ellipse cx="0" cy=".04" rx=".24" ry=".5" fill="url(#hl)" transform="rotate(42)"/></g>
<g transform="translate(549 351) rotate(10) scale(15 11.5)"><circle r="1.02" fill="url(#rc)"/><circle r=".97" fill="#500000" opacity=".28"/><ellipse cx="-.12" cy="-.46" rx=".62" ry=".34" fill="url(#dk)"/><ellipse cx=".18" cy=".5" rx=".62" ry=".34" fill="url(#dk)"/><ellipse cx="0" cy="0" rx=".6" ry=".2" fill="url(#hl)"/></g>
<g transform="translate(513 357) rotate(15) scale(24 18)"><circle r="1.02" fill="url(#rc)"/><circle r=".97" fill="#500000" opacity=".28"/><ellipse cx="-.12" cy="-.46" rx=".62" ry=".34" fill="url(#dk)"/><ellipse cx=".18" cy=".5" rx=".62" ry=".34" fill="url(#dk)"/><ellipse cx="0" cy="0" rx=".6" ry=".2" fill="url(#hl)"/></g>
<g transform="translate(570 362) rotate(0) scale(12 14)"><circle r="1.02" fill="url(#rc)"/><circle r=".97" fill="#500000" opacity=".28"/><ellipse cx="-.36" cy="-.34" rx=".56" ry=".33" fill="url(#dk)" transform="rotate(-42 -.36 -.34)"/><ellipse cx=".38" cy=".42" rx=".5" ry=".36" fill="url(#dk)" transform="rotate(-42 .38 .42)"/><ellipse cx="0" cy=".04" rx=".24" ry=".5" fill="url(#hl)" transform="rotate(42)"/></g>
<g transform="translate(74.6 361) rotate(0) scale(16.5 16.5)"><circle r="1.02" fill="url(#rc)"/><ellipse cx="-.36" cy="-.34" rx=".56" ry=".33" fill="url(#dk)" transform="rotate(-42 -.36 -.34)"/><ellipse cx=".38" cy=".42" rx=".5" ry=".36" fill="url(#dk)" transform="rotate(-42 .38 .42)"/><ellipse cx="0" cy=".04" rx=".24" ry=".5" fill="url(#hl)" transform="rotate(42)"/></g>
<g transform="translate(432 367) rotate(0) scale(16 16)"><circle r="1.02" fill="url(#rc)"/><circle r=".97" fill="#500000" opacity=".28"/><ellipse cx="-.36" cy="-.34" rx=".56" ry=".33" fill="url(#dk)" transform="rotate(-42 -.36 -.34)"/><ellipse cx=".38" cy=".42" rx=".5" ry=".36" fill="url(#dk)" transform="rotate(-42 .38 .42)"/><ellipse cx="0" cy=".04" rx=".24" ry=".5" fill="url(#hl)" transform="rotate(42)"/></g>
<g transform="translate(412 396) rotate(-10) scale(26 22)"><circle r="1.02" fill="url(#rc)"/><circle r=".97" fill="#500000" opacity=".28"/><ellipse cx="-.12" cy="-.46" rx=".62" ry=".34" fill="url(#dk)"/><ellipse cx=".18" cy=".5" rx=".62" ry=".34" fill="url(#dk)"/><ellipse cx="0" cy="0" rx=".6" ry=".2" fill="url(#hl)"/></g>
<g transform="translate(382 413) rotate(20) scale(14 18)"><circle r="1.02" fill="url(#rc)"/><circle r=".97" fill="#500000" opacity=".28"/><ellipse cx="-.36" cy="-.34" rx=".56" ry=".33" fill="url(#dk)" transform="rotate(-42 -.36 -.34)"/><ellipse cx=".38" cy=".42" rx=".5" ry=".36" fill="url(#dk)" transform="rotate(-42 .38 .42)"/><ellipse cx="0" cy=".04" rx=".24" ry=".5" fill="url(#hl)" transform="rotate(42)"/></g>
<g transform="translate(224.4 400) rotate(0) scale(15 13)"><circle r="1.02" fill="url(#rc)"/><ellipse cx="0" cy="0" rx=".84" ry=".8" fill="url(#dk)"/><ellipse cx=".04" cy=".02" rx=".3" ry=".28" fill="#c01010"/><ellipse cx=".04" cy=".02" rx=".14" ry=".13" fill="#500000"/></g>
<g transform="translate(23.3 406.6) rotate(0) scale(15.5 15.5)"><circle r="1.02" fill="url(#rc)"/><ellipse cx="-.36" cy="-.34" rx=".56" ry=".33" fill="url(#dk)" transform="rotate(-42 -.36 -.34)"/><ellipse cx=".38" cy=".42" rx=".5" ry=".36" fill="url(#dk)" transform="rotate(-42 .38 .42)"/><ellipse cx="0" cy=".04" rx=".24" ry=".5" fill="url(#hl)" transform="rotate(42)"/></g>
<g transform="translate(65.3 405) rotate(0) scale(27.5 28)"><circle r="1.02" fill="url(#rc)"/><ellipse cx="-.36" cy="-.34" rx=".56" ry=".33" fill="url(#dk)" transform="rotate(-42 -.36 -.34)"/><ellipse cx=".38" cy=".42" rx=".5" ry=".36" fill="url(#dk)" transform="rotate(-42 .38 .42)"/><ellipse cx="0" cy=".04" rx=".24" ry=".5" fill="url(#hl)" transform="rotate(42)"/></g>
<g transform="translate(575 406) rotate(0) scale(8 13)"><circle r="1.02" fill="url(#rc)"/><circle r=".97" fill="#500000" opacity=".28"/><ellipse cx="-.1" cy="-.1" rx=".72" ry=".62" fill="url(#dk)"/><ellipse cx=".35" cy=".45" rx=".3" ry=".24" fill="url(#hl)"/></g>
<g transform="translate(492 431) rotate(-22) scale(23 16.5)"><circle r="1.02" fill="url(#rc)"/><circle r=".97" fill="#500000" opacity=".28"/><ellipse cx="-.12" cy="-.46" rx=".62" ry=".34" fill="url(#dk)"/><ellipse cx=".18" cy=".5" rx=".62" ry=".34" fill="url(#dk)"/><ellipse cx="0" cy="0" rx=".6" ry=".2" fill="url(#hl)"/></g>
<g transform="translate(67 477) rotate(0) scale(16 15.5)"><circle r="1.02" fill="url(#rc)"/><ellipse cx="-.36" cy="-.34" rx=".56" ry=".33" fill="url(#dk)" transform="rotate(-42 -.36 -.34)"/><ellipse cx=".38" cy=".42" rx=".5" ry=".36" fill="url(#dk)" transform="rotate(-42 .38 .42)"/><ellipse cx="0" cy=".04" rx=".24" ry=".5" fill="url(#hl)" transform="rotate(42)"/></g>
<g transform="translate(553 471) rotate(28) scale(10 14.5)"><circle r="1.02" fill="url(#rc)"/><circle r=".97" fill="#500000" opacity=".28"/><ellipse cx="-.12" cy="-.46" rx=".62" ry=".34" fill="url(#dk)"/><ellipse cx=".18" cy=".5" rx=".62" ry=".34" fill="url(#dk)"/><ellipse cx="0" cy="0" rx=".6" ry=".2" fill="url(#hl)"/></g>
<g transform="translate(363 508) rotate(35) scale(17.5 24)"><circle r="1.02" fill="url(#rc)"/><circle r=".97" fill="#500000" opacity=".28"/><ellipse cx="-.12" cy="-.46" rx=".62" ry=".34" fill="url(#dk)"/><ellipse cx=".18" cy=".5" rx=".62" ry=".34" fill="url(#dk)"/><ellipse cx="0" cy="0" rx=".6" ry=".2" fill="url(#hl)"/></g>
<g transform="translate(141 531) rotate(0) scale(28.5 27.5)"><circle r="1.02" fill="url(#rc)"/><ellipse cx="-.36" cy="-.34" rx=".56" ry=".33" fill="url(#dk)" transform="rotate(-42 -.36 -.34)"/><ellipse cx=".38" cy=".42" rx=".5" ry=".36" fill="url(#dk)" transform="rotate(-42 .38 .42)"/><ellipse cx="0" cy=".04" rx=".24" ry=".5" fill="url(#hl)" transform="rotate(42)"/></g>
<g transform="translate(421 74) rotate(-20)"><ellipse rx="13.5" ry="11.25" fill="url(#tb)"/><ellipse cx="3.6" cy="-2.7" rx="3.24" ry="1.98" fill="#f4e4a8" opacity=".8"/><ellipse cx="-4.5" cy="2.7" rx="2.7" ry="1.8" fill="#f4e4a8" opacity=".65"/><ellipse cx="-2.7" cy="-4.05" rx="1.98" ry="2.7" fill="#402808" opacity=".7"/></g>
<g transform="translate(452 76) rotate(10)"><ellipse rx="13.5" ry="11.25" fill="url(#tb)"/><ellipse cx="3.6" cy="-2.7" rx="3.24" ry="1.98" fill="#f4e4a8" opacity=".8"/><ellipse cx="-4.5" cy="2.7" rx="2.7" ry="1.8" fill="#f4e4a8" opacity=".65"/><ellipse cx="-2.7" cy="-4.05" rx="1.98" ry="2.7" fill="#402808" opacity=".7"/></g>
<g transform="translate(297 99) rotate(60)"><ellipse rx="12" ry="10" fill="url(#tb)"/><ellipse cx="3.2" cy="-2.4" rx="2.88" ry="1.76" fill="#f4e4a8" opacity=".8"/><ellipse cx="-4" cy="2.4" rx="2.4" ry="1.6" fill="#f4e4a8" opacity=".65"/><ellipse cx="-2.4" cy="-3.6" rx="1.76" ry="2.4" fill="#402808" opacity=".7"/></g>
<g transform="translate(477 195) rotate(0)"><ellipse rx="10.5" ry="8.75" fill="url(#tb)"/><ellipse cx="2.8" cy="-2.1" rx="2.52" ry="1.54" fill="#f4e4a8" opacity=".8"/><ellipse cx="-3.5" cy="2.1" rx="2.1" ry="1.4" fill="#f4e4a8" opacity=".65"/><ellipse cx="-2.1" cy="-3.15" rx="1.54" ry="2.1" fill="#402808" opacity=".7"/></g>
<g transform="translate(297.7 243.5) rotate(0)"><ellipse rx="13.5" ry="11.25" fill="url(#tb)"/><ellipse cx="3.6" cy="-2.7" rx="3.24" ry="1.98" fill="#f4e4a8" opacity=".8"/><ellipse cx="-4.5" cy="2.7" rx="2.7" ry="1.8" fill="#f4e4a8" opacity=".65"/><ellipse cx="-2.7" cy="-4.05" rx="1.98" ry="2.7" fill="#402808" opacity=".7"/></g>
<g transform="translate(157.8 394) rotate(0)"><ellipse rx="12.75" ry="10.625" fill="url(#tb)"/><ellipse cx="3.4" cy="-2.55" rx="3.06" ry="1.87" fill="#f4e4a8" opacity=".8"/><ellipse cx="-4.25" cy="2.55" rx="2.55" ry="1.7" fill="#f4e4a8" opacity=".65"/><ellipse cx="-2.55" cy="-3.825" rx="1.87" ry="2.55" fill="#402808" opacity=".7"/></g>
<g transform="translate(105 433) rotate(40)"><ellipse rx="12" ry="10" fill="url(#tb)"/><ellipse cx="3.2" cy="-2.4" rx="2.88" ry="1.76" fill="#f4e4a8" opacity=".8"/><ellipse cx="-4" cy="2.4" rx="2.4" ry="1.6" fill="#f4e4a8" opacity=".65"/><ellipse cx="-2.4" cy="-3.6" rx="1.76" ry="2.4" fill="#402808" opacity=".7"/></g>
<g transform="translate(117 491) rotate(20)"><ellipse rx="12.75" ry="10.625" fill="url(#tb)"/><ellipse cx="3.4" cy="-2.55" rx="3.06" ry="1.87" fill="#f4e4a8" opacity=".8"/><ellipse cx="-4.25" cy="2.55" rx="2.55" ry="1.7" fill="#f4e4a8" opacity=".65"/><ellipse cx="-2.55" cy="-3.825" rx="1.87" ry="2.55" fill="#402808" opacity=".7"/></g>
<g transform="translate(246 486) rotate(70)"><ellipse rx="12.75" ry="10.625" fill="url(#tby)"/><ellipse cx="3.4" cy="-2.55" rx="3.06" ry="1.87" fill="#f4e4a8" opacity=".8"/><ellipse cx="-4.25" cy="2.55" rx="2.55" ry="1.7" fill="#f4e4a8" opacity=".65"/><ellipse cx="-2.55" cy="-3.825" rx="1.87" ry="2.55" fill="#402808" opacity=".7"/></g>
<g transform="translate(257 518) rotate(0)"><ellipse rx="12.75" ry="10.625" fill="url(#tb)"/><ellipse cx="3.4" cy="-2.55" rx="3.06" ry="1.87" fill="#f4e4a8" opacity=".8"/><ellipse cx="-4.25" cy="2.55" rx="2.55" ry="1.7" fill="#f4e4a8" opacity=".65"/><ellipse cx="-2.55" cy="-3.825" rx="1.87" ry="2.55" fill="#402808" opacity=".7"/></g>
<g transform="translate(192 531) rotate(0)"><ellipse rx="12" ry="10" fill="url(#tb)"/><ellipse cx="3.2" cy="-2.4" rx="2.88" ry="1.76" fill="#f4e4a8" opacity=".8"/><ellipse cx="-4" cy="2.4" rx="2.4" ry="1.6" fill="#f4e4a8" opacity=".65"/><ellipse cx="-2.4" cy="-3.6" rx="1.76" ry="2.4" fill="#402808" opacity=".7"/></g>
<g transform="translate(297 513) rotate(10)"><ellipse rx="12.75" ry="10.625" fill="url(#tb)"/><ellipse cx="3.4" cy="-2.55" rx="3.06" ry="1.87" fill="#f4e4a8" opacity=".8"/><ellipse cx="-4.25" cy="2.55" rx="2.55" ry="1.7" fill="#f4e4a8" opacity=".65"/><ellipse cx="-2.55" cy="-3.825" rx="1.87" ry="2.55" fill="#402808" opacity=".7"/></g>
<g transform="translate(468 514) rotate(0)"><ellipse rx="12.75" ry="10.625" fill="url(#tby)"/><ellipse cx="3.4" cy="-2.55" rx="3.06" ry="1.87" fill="#f4e4a8" opacity=".8"/><ellipse cx="-4.25" cy="2.55" rx="2.55" ry="1.7" fill="#f4e4a8" opacity=".65"/><ellipse cx="-2.55" cy="-3.825" rx="1.87" ry="2.55" fill="#402808" opacity=".7"/></g>
<g transform="translate(488 494) rotate(60)"><ellipse rx="12.75" ry="10.625" fill="url(#tb)"/><ellipse cx="3.4" cy="-2.55" rx="3.06" ry="1.87" fill="#f4e4a8" opacity=".8"/><ellipse cx="-4.25" cy="2.55" rx="2.55" ry="1.7" fill="#f4e4a8" opacity=".65"/><ellipse cx="-2.55" cy="-3.825" rx="1.87" ry="2.55" fill="#402808" opacity=".7"/></g>
<g transform="translate(403 533) rotate(-15)"><ellipse rx="14.25" ry="11.875" fill="url(#tb)"/><ellipse cx="3.8" cy="-2.85" rx="3.42" ry="2.09" fill="#f4e4a8" opacity=".8"/><ellipse cx="-4.75" cy="2.85" rx="2.85" ry="1.9" fill="#f4e4a8" opacity=".65"/><ellipse cx="-2.85" cy="-4.275" rx="2.09" ry="2.85" fill="#402808" opacity=".7"/></g>
<g transform="translate(529 542) rotate(0)"><ellipse rx="13.5" ry="11.25" fill="url(#tb)"/><ellipse cx="3.6" cy="-2.7" rx="3.24" ry="1.98" fill="#f4e4a8" opacity=".8"/><ellipse cx="-4.5" cy="2.7" rx="2.7" ry="1.8" fill="#f4e4a8" opacity=".65"/><ellipse cx="-2.7" cy="-4.05" rx="1.98" ry="2.7" fill="#402808" opacity=".7"/></g>
</g>
<g fill="#1c9cd8"><path d="M63 110 C100 97 160 89 198 100 C214 105 222 116 219 126 C217 132 213 135 209 134 C213 130 214 124 210 119 C204 112 190 109 170 109 C150 109 120 116 96 118 C84 118 72 115 63 110z"/><path d="M96 113.5 C130 106 170 102 200 108 L200 109.2 C170 105 130 109 96 113.5z" fill="#fff" opacity=".85"/><text x="30" y="140.8" textLength="52.5" style="font-family:'Liberation Sans',sans-serif" font-size="27.6" font-weight="bold" font-style="italic" lengthAdjust="spacingAndGlyphs" stroke="#1c9cd8" stroke-width="2.3" stroke-linejoin="round">Lan</text><text x="95" y="140.8" textLength="30" style="font-family:'Liberation Sans',sans-serif" font-size="27.6" font-weight="bold" font-style="italic" lengthAdjust="spacingAndGlyphs" stroke="#1c9cd8" stroke-width="2.3" stroke-linejoin="round">Yu</text><text x="131" y="140.8" textLength="77.5" style="font-family:'Liberation Sans',sans-serif" font-size="27.6" font-weight="bold" font-style="italic" lengthAdjust="spacingAndGlyphs" stroke="#1c9cd8" stroke-width="2.3" stroke-linejoin="round">Xuan</text></g>
</g></svg>
<svg class="abs" style="left:0;top:0" width="1440" height="900" viewBox="0 0 1440 900">
<defs>
<linearGradient id="spec" x1="0" x2="1" y1="0" y2="0">
<stop offset="0" stop-color="#080000"/><stop offset="0.025" stop-color="#2a0000"/><stop offset="0.125" stop-color="#ff1010"/>
<stop offset="0.25" stop-color="#ffa000"/><stop offset="0.375" stop-color="#ffff10"/><stop offset="0.5" stop-color="#10f010"/>
<stop offset="0.625" stop-color="#10f8f8"/><stop offset="0.75" stop-color="#1010ff"/><stop offset="0.875" stop-color="#ff10ff"/>
<stop offset="0.975" stop-color="#300030"/><stop offset="1" stop-color="#080008"/>
</linearGradient>
<linearGradient id="specv" x1="0" x2="0" y1="0" y2="1">
<stop offset="0" stop-color="#000" stop-opacity="0.8"/><stop offset="0.14" stop-color="#000" stop-opacity="0.1"/><stop offset="0.25" stop-color="#000" stop-opacity="0"/>
<stop offset="0.85" stop-color="#000" stop-opacity="0"/><stop offset="1" stop-color="#000" stop-opacity="0.25"/>
</linearGradient>
</defs>
<polygon points="597.5,123.5 1051.5,123.5 1056.5,128.5 1056.5,588.5 1051.5,593.5 597.5,593.5 592.5,588.5 592.5,128.5" fill="#a9bace" stroke="#000" stroke-width="1.3"/>
<rect x="615.0" y="143.5" width="416.0" height="424.5" fill="#9092ea"/>
<rect x="617.0" y="145.5" width="412.0" height="421.5" fill="#000" stroke="#08086a" stroke-width="1.2"/>
<rect x="617.0" y="543.0" width="412.0" height="24.0" fill="url(#spec)"/>
<rect x="617.0" y="543.0" width="412.0" height="24.0" fill="url(#specv)"/>
<path d="M668.8 145.5V543.0M720.3 145.5V543.0M771.8 145.5V543.0M823.3 145.5V543.0M874.8 145.5V543.0M926.3 145.5V543.0M977.8 145.5V543.0M617.0 483.3H1029.0M617.0 421.9H1029.0M617.0 360.5H1029.0M617.0 299.1H1029.0M617.0 237.7H1029.0M617.0 176.3H1029.0" stroke="#38683a" stroke-width="1" fill="none"/>
<path d="M617.5 297 L667 259.5 Q669 258.2 672 258.2 L719 257.6 Q724 257.6 726.5 263 L747 308 C757 333 763 357.5 772 357.5 C781 357.5 790 345 805 323 Q813 311.2 821 311.2 L875.8 311.2 L926.7 328.8 L975 350 Q978 351.3 982 351.4 L1029 352.5" fill="none" stroke="#1a18d8" stroke-width="4.2" stroke-linejoin="round"/>
<path d="M617.5 403 L640 329 C650 300 660 286.5 670 286.5 C680 286.5 690 299 700 312 C708 323 717 328 721 335 C724 341 727 353 730 365 L745 422 C752 447 760 470 767 480 Q769 483 773 483 L1029 483" fill="none" stroke="#e0201c" stroke-width="4.2" stroke-linejoin="round"/>
<text transform="translate(623.0 142.6) scale(0.93 1)" text-anchor="middle" font-size="16.4" fill="#0a0a14" font-weight="normal">96</text>
<text transform="translate(668.0 142.6) scale(0.93 1)" text-anchor="middle" font-size="16.4" fill="#0a0a14" font-weight="normal">78</text>
<text transform="translate(720.0 142.6) scale(0.93 1)" text-anchor="middle" font-size="16.4" fill="#0a0a14" font-weight="normal">53</text>
<text transform="translate(772.5 142.6) scale(0.93 1)" text-anchor="middle" font-size="16.4" fill="#0a0a14" font-weight="normal">45</text>
<text transform="translate(824.0 142.6) scale(0.93 1)" text-anchor="middle" font-size="16.4" fill="#0a0a14" font-weight="normal">33</text>
<text transform="translate(877.5 142.6) scale(0.93 1)" text-anchor="middle" font-size="16.4" fill="#0a0a14" font-weight="normal">21</text>
<text transform="translate(929.0 142.6) scale(0.93 1)" text-anchor="middle" font-size="16.4" fill="#0a0a14" font-weight="normal">15</text>
<text transform="translate(978.5 142.6) scale(0.93 1)" text-anchor="middle" font-size="16.4" fill="#0a0a14" font-weight="normal">9</text>
<text transform="translate(1022.3 142.6) scale(0.93 1)" text-anchor="middle" font-size="16.4" fill="#0a0a14" font-weight="normal">6</text>
<text transform="translate(626.0 590.4) scale(0.93 1)" text-anchor="middle" font-size="16.4" fill="#0a0a14" font-weight="normal">1.8</text>
<text transform="translate(672.5 590.4) scale(0.93 1)" text-anchor="middle" font-size="16.4" fill="#0a0a14" font-weight="normal">2.6</text>
<text transform="translate(722.6 590.4) scale(0.93 1)" text-anchor="middle" font-size="16.4" fill="#0a0a14" font-weight="normal">3.4</text>
<text transform="translate(774.3 590.4) scale(0.93 1)" text-anchor="middle" font-size="16.4" fill="#e6f06a" font-weight="normal">4.2</text>
<text transform="translate(824.8 590.4) scale(0.93 1)" text-anchor="middle" font-size="16.4" fill="#0a0a14" font-weight="normal">4.9</text>
<text transform="translate(879.4 590.4) scale(0.93 1)" text-anchor="middle" font-size="16.4" fill="#0a0a14" font-weight="normal">5.8</text>
<text transform="translate(929.0 590.4) scale(0.93 1)" text-anchor="middle" font-size="16.4" fill="#0a0a14" font-weight="normal">6.6</text>
<text transform="translate(981.7 590.4) scale(0.93 1)" text-anchor="middle" font-size="16.4" fill="#0a0a14" font-weight="normal">7.4</text>
<text transform="translate(1022.6 590.4) scale(0.93 1)" text-anchor="middle" font-size="16.4" fill="#0a0a14" font-weight="normal">8.2</text>
<text transform="translate(605.0 158.8) scale(0.93 1)" text-anchor="middle" font-size="16.4" fill="#0a0a14" font-weight="normal">6.5</text>
<text transform="translate(605.3 488.9) scale(0.93 1)" text-anchor="middle" font-size="16.4" fill="#0a0a14" font-weight="normal">1</text>
<text transform="translate(605.3 427.5) scale(0.93 1)" text-anchor="middle" font-size="16.4" fill="#0a0a14" font-weight="normal">2</text>
<text transform="translate(605.3 366.1) scale(0.93 1)" text-anchor="middle" font-size="16.4" fill="#0a0a14" font-weight="normal">3</text>
<text transform="translate(605.3 304.7) scale(0.93 1)" text-anchor="middle" font-size="16.4" fill="#0a0a14" font-weight="normal">4</text>
<text transform="translate(605.3 243.3) scale(0.93 1)" text-anchor="middle" font-size="16.4" fill="#0a0a14" font-weight="normal">5</text>
<text transform="translate(605.3 181.9) scale(0.93 1)" text-anchor="middle" font-size="16.4" fill="#0a0a14" font-weight="normal">6</text>
<text transform="translate(605.5 546.4) scale(0.93 1)" text-anchor="middle" font-size="16.4" fill="#0a0a14" font-weight="normal">0</text>
<text transform="translate(1031.5 158.8) scale(0.93 1)" text-anchor="start" font-size="16.4" fill="#0a0a14" font-weight="normal">255</text>
<text transform="translate(1031.0 190.0) scale(0.93 1)" text-anchor="start" font-size="16.4" fill="#0a0a14" font-weight="normal">240</text>
<text transform="translate(1031.5 248.6) scale(0.93 1)" text-anchor="start" font-size="16.4" fill="#0a0a14" font-weight="normal">200</text>
<text transform="translate(1030.0 311.6) scale(0.93 1)" text-anchor="start" font-size="16.4" fill="#0a0a14" font-weight="normal">135</text>
<text transform="translate(1036.5 373.6) scale(0.93 1)" text-anchor="start" font-size="16.4" fill="#0a0a14" font-weight="normal">64</text>
<text transform="translate(1039.0 436.0) scale(0.93 1)" text-anchor="start" font-size="16.4" fill="#0a0a14" font-weight="normal">17</text>
<text transform="translate(1033.5 498.6) scale(0.93 1)" text-anchor="start" font-size="16.4" fill="#0a0a14" font-weight="normal">8.5</text>
<text transform="translate(1044.5 544.8) scale(0.93 1)" text-anchor="start" font-size="16.4" fill="#0a0a14" font-weight="normal">0</text>
<text transform="translate(596.0 581.4) scale(0.98 1)" text-anchor="start" font-size="18.8" fill="#0a0a14" font-weight="bold">Hz</text>
<text transform="translate(1029.2 579.3) scale(0.98 1)" text-anchor="start" font-size="18.8" fill="#0a0a14" font-weight="bold">dB</text>
</svg>
<div class="abs btn exit">EXIT</div>
<div class="abs btn resume">Resume</div><div class="abs focus"></div>
<svg class="abs" style="left:0;top:600px" width="1100" height="110" viewBox="0 600 1100 110">
<defs>
<linearGradient id="gtop" gradientUnits="userSpaceOnUse" x1="8" x2="1035" y1="0" y2="0"><stop offset="0.0000" stop-color="#fffffa"/><stop offset="0.0506" stop-color="#ffffe8"/><stop offset="0.1383" stop-color="#ffffc4"/><stop offset="0.1870" stop-color="#ffff9a"/><stop offset="0.2454" stop-color="#ffff58"/><stop offset="0.3019" stop-color="#ffff08"/><stop offset="0.3281" stop-color="#ffe40c"/><stop offset="0.3817" stop-color="#ffc420"/><stop offset="0.4401" stop-color="#ffa030"/><stop offset="0.4791" stop-color="#ff7c38"/><stop offset="0.5180" stop-color="#ff5a30"/><stop offset="0.5667" stop-color="#ff3018"/><stop offset="0.6203" stop-color="#ff0404"/><stop offset="0.6738" stop-color="#d80000"/><stop offset="0.7420" stop-color="#9c0000"/><stop offset="0.8004" stop-color="#700000"/><stop offset="0.8491" stop-color="#480000"/><stop offset="0.8978" stop-color="#1c0000"/><stop offset="0.9318" stop-color="#020000"/><stop offset="1.0000" stop-color="#000"/></linearGradient>
<linearGradient id="gbot" gradientUnits="userSpaceOnUse" x1="8" x2="1035" y1="0" y2="0"><stop offset="0.0000" stop-color="#000"/><stop offset="0.1577" stop-color="#020004"/><stop offset="0.1870" stop-color="#140818"/><stop offset="0.2259" stop-color="#2c1038"/><stop offset="0.2746" stop-color="#4a1c62"/><stop offset="0.3135" stop-color="#662484"/><stop offset="0.3281" stop-color="#6c2890"/><stop offset="0.3817" stop-color="#722a8e"/><stop offset="0.4499" stop-color="#7a3292"/><stop offset="0.4791" stop-color="#6c2ea6"/><stop offset="0.5131" stop-color="#4e22c4"/><stop offset="0.5618" stop-color="#2a14de"/><stop offset="0.6203" stop-color="#0404fc"/><stop offset="0.6641" stop-color="#2a4afc"/><stop offset="0.7030" stop-color="#4e84fa"/><stop offset="0.7614" stop-color="#7cc6fc"/><stop offset="0.8199" stop-color="#98dcfc"/><stop offset="0.8685" stop-color="#b6ecfc"/><stop offset="0.9270" stop-color="#dcfcfc"/><stop offset="1.0000" stop-color="#f4ffff"/></linearGradient>
</defs>
<rect x="8" y="614" width="1027" height="32.3" fill="url(#gtop)"/>
<rect x="8" y="661.3" width="1027" height="31.4" fill="url(#gbot)"/>
<path d="M31.5 613.4V647M58.3 613.4V647M97.5 613.4V647M109.4 613.4V647M151.4 613.4V647M201.4 613.4V647M232.5 613.4V647M271.4 613.4V647M302.4 613.4V647M325.3 613.4V647M368.5 613.4V647M403.6 613.4V647M461.5 613.4V647M495.5 613.4V647M530.5 613.4V647M550.6 613.4V647M584.6 613.4V647M650.6 613.4V647M669.3 613.4V647M704.6 613.4V647M735.4 613.4V647M782.6 613.4V647M840.6 613.4V647M882.4 613.4V647M921.5 613.4V647M960.4 613.4V647M1025.3 613.4V647" stroke="#1c5c14" stroke-opacity="0.8" stroke-width="1.1" fill="none"/>
<path d="M31.5 661.3V693.3M58.3 661.3V693.3M97.5 661.3V693.3M109.4 661.3V693.3M151.4 661.3V693.3M201.4 661.3V693.3M232.5 661.3V693.3M271.4 661.3V693.3M302.4 661.3V693.3M325.3 661.3V693.3M368.5 661.3V693.3M403.6 661.3V693.3M461.5 661.3V693.3M495.5 661.3V693.3M530.5 661.3V693.3M550.6 661.3V693.3M584.6 661.3V693.3M650.6 661.3V693.3M669.3 661.3V693.3M704.6 661.3V693.3M735.4 661.3V693.3M782.6 661.3V693.3M840.6 661.3V693.3M882.4 661.3V693.3M921.5 661.3V693.3M960.4 661.3V693.3M1025.3 661.3V693.3" stroke="#1c6c2c" stroke-opacity="0.62" stroke-width="1.1" fill="none"/>
<path d="M8.5 614V646.6M8.5 661.3V692.7M174.3 614V646.6M174.3 661.3V692.7M341.5 614V646.6M341.5 661.3V692.7M515.4 614V646.6M515.4 661.3V692.7M685.3 614V646.6M685.3 661.3V692.7M859.4 614V646.6M859.4 661.3V692.7M1033.3 614V646.6M1033.3 661.3V692.7" stroke="#26700e" stroke-opacity="0.92" stroke-width="2.8" fill="none"/>
<text x="32.7" y="661.8" text-anchor="middle" font-size="14" fill="#08080c">1</text>
<text x="59.5" y="661.8" text-anchor="middle" font-size="14" fill="#08080c">2</text>
<text x="98.7" y="661.8" text-anchor="middle" font-size="14" fill="#08080c">3</text>
<text x="110.6" y="661.8" text-anchor="middle" font-size="14" fill="#08080c">4</text>
<text x="152.6" y="661.8" text-anchor="middle" font-size="14" fill="#08080c">5</text>
<text x="202.6" y="661.8" text-anchor="middle" font-size="14" fill="#08080c">2</text>
<text x="233.7" y="661.8" text-anchor="middle" font-size="14" fill="#08080c">3</text>
<text x="272.6" y="661.8" text-anchor="middle" font-size="14" fill="#08080c">4</text>
<text x="303.6" y="661.8" text-anchor="middle" font-size="14" fill="#08080c">5</text>
<text x="326.5" y="661.8" text-anchor="middle" font-size="14" fill="#08080c">6</text>
<text x="369.7" y="661.8" text-anchor="middle" font-size="14" fill="#08080c">3</text>
<text x="404.8" y="661.8" text-anchor="middle" font-size="14" fill="#08080c">4</text>
<text x="462.7" y="661.8" text-anchor="middle" font-size="14" fill="#08080c">5</text>
<text x="496.7" y="661.8" text-anchor="middle" font-size="14" fill="#08080c">6</text>
<text x="531.7" y="661.8" text-anchor="middle" font-size="14" fill="#08080c">4</text>
<text x="551.8" y="661.8" text-anchor="middle" font-size="14" fill="#08080c">5</text>
<text x="585.8" y="661.8" text-anchor="middle" font-size="14" fill="#08080c">6</text>
<text x="651.8" y="661.8" text-anchor="middle" font-size="14" fill="#08080c">7</text>
<text x="670.5" y="661.8" text-anchor="middle" font-size="14" fill="#08080c">8</text>
<text x="705.8" y="661.8" text-anchor="middle" font-size="14" fill="#08080c">4</text>
<text x="736.6" y="661.8" text-anchor="middle" font-size="14" fill="#08080c">5</text>
<text x="783.8" y="661.8" text-anchor="middle" font-size="14" fill="#08080c">6</text>
<text x="841.8" y="661.8" text-anchor="middle" font-size="14" fill="#08080c">7</text>
<text x="883.6" y="661.8" text-anchor="middle" font-size="14" fill="#08080c">3</text>
<text x="922.7" y="661.8" text-anchor="middle" font-size="14" fill="#08080c">4</text>
<text x="961.6" y="661.8" text-anchor="middle" font-size="14" fill="#08080c">5</text>
<text x="1026.5" y="661.8" text-anchor="middle" font-size="14" fill="#08080c">6</text>
<text x="10.8" y="664.2" text-anchor="middle" font-size="19" fill="#000" stroke="#000" stroke-width="0.15">1</text>
<text x="176.4" y="664.2" text-anchor="middle" font-size="19" fill="#000" stroke="#000" stroke-width="0.15">2</text>
<text x="343.1" y="664.2" text-anchor="middle" font-size="19" fill="#000" stroke="#000" stroke-width="0.15">3</text>
<text x="517.1" y="664.2" text-anchor="middle" font-size="19" fill="#000" stroke="#000" stroke-width="0.15">4</text>
<text x="687.7" y="664.2" text-anchor="middle" font-size="19" fill="#000" stroke="#000" stroke-width="0.15">5</text>
<text x="861.5" y="664.2" text-anchor="middle" font-size="19" fill="#000" stroke="#000" stroke-width="0.15">6</text>
<text x="1037.8" y="664.2" text-anchor="middle" font-size="19" fill="#000" stroke="#000" stroke-width="0.15">0</text>
<rect x="404" y="618" width="6.2" height="75" rx="3.1" fill="#2c2c2c"/>
<path d="M404 646.5V621.1a3.1 3.1 0 0 1 6.2 0V646.5z" fill="#1c58cc"/>
<rect x="404" y="652" width="6.2" height="9.5" fill="#f2f6ee"/>
<path d="M404 661.3V689.9a3.1 3.1 0 0 0 6.2 0V661.3z" fill="#8fd08f"/>
<text x="404.8" y="661.8" text-anchor="middle" font-size="14" fill="#08080c">4</text>
</svg>
<svg class="abs status" width="1440" height="900" viewBox="0 0 1440 900" style="pointer-events:none"><polygon points="13.0,826.5 1033.2,826.5 1037.7,831.0 1037.7,865.5 1033.2,870.0 13.0,870.0 8.5,865.5 8.5,831.0" fill="#bdd2e8" stroke="#000" stroke-width="1.2"/></svg>
<div class="abs stxt">BLOOD  CELLS</div>
</body></html>
